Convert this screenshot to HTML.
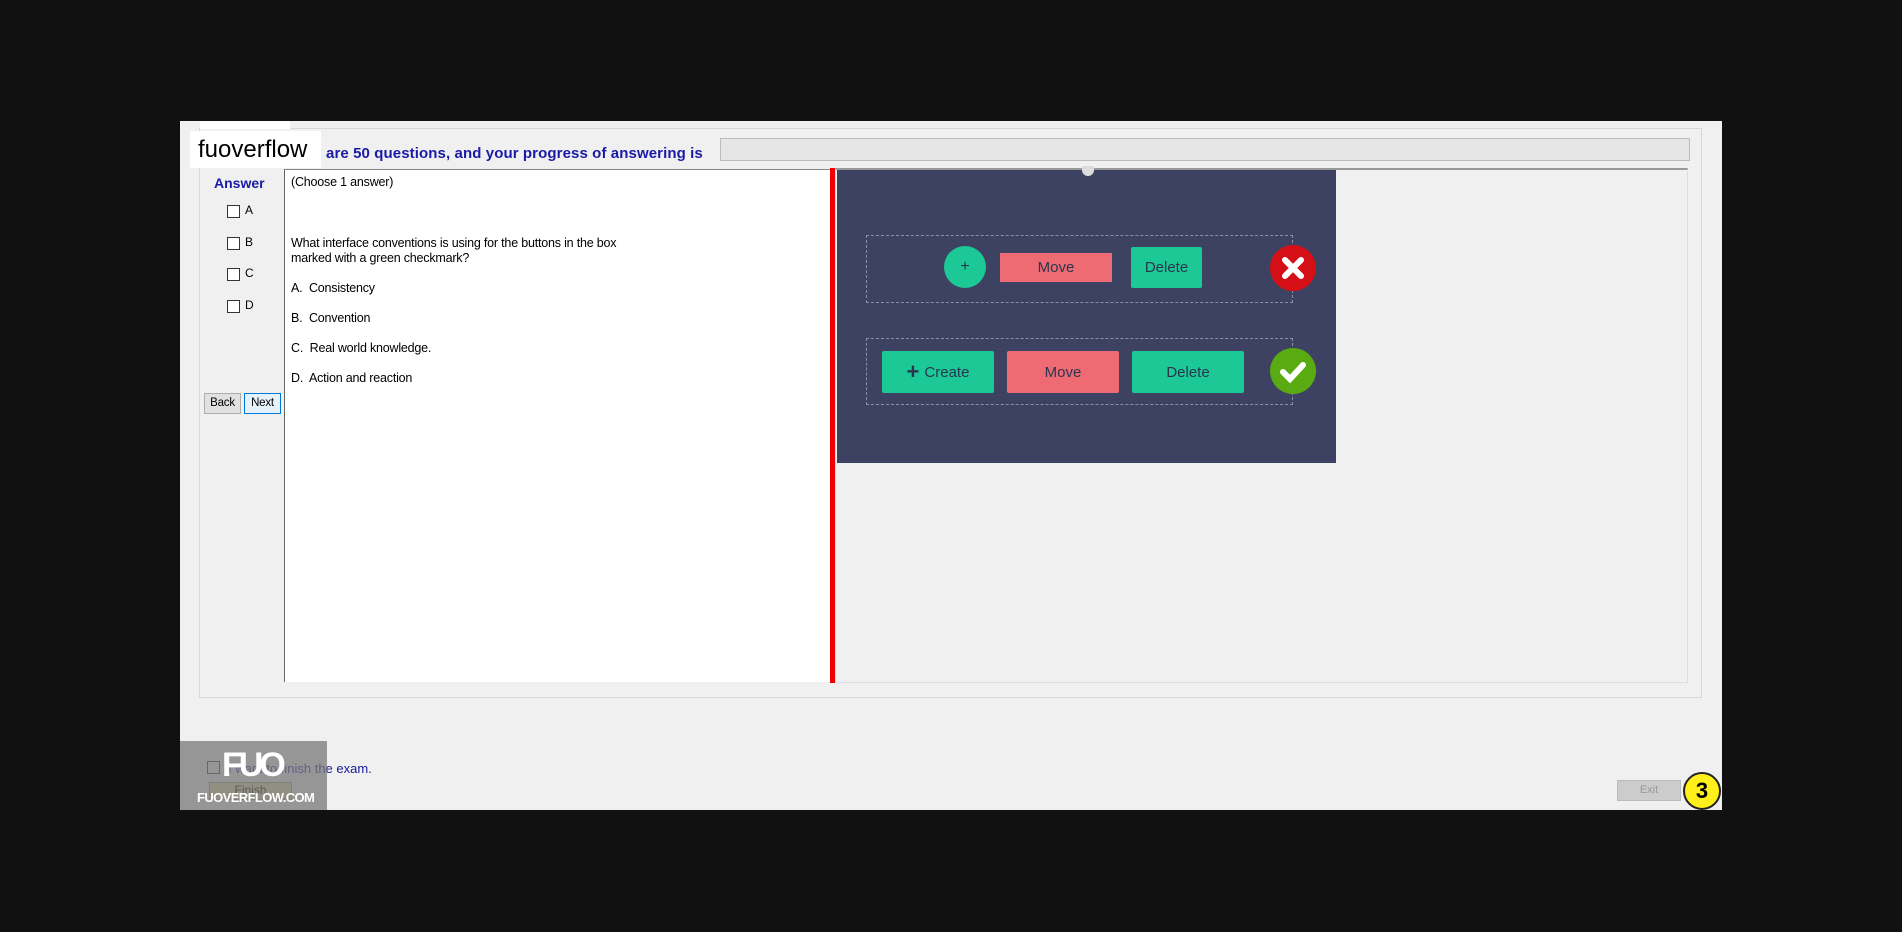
<!DOCTYPE html>
<html><head><meta charset="utf-8"><style>
*{margin:0;padding:0;box-sizing:border-box}
body{width:1902px;height:932px;background:#111;position:relative;overflow:hidden;font-family:"Liberation Sans",sans-serif}
.a{position:absolute}
.t{font-size:12.5px;color:#000;white-space:nowrap;letter-spacing:-.2px}
.cb{width:13px;height:13px;border:1px solid #333;background:#fff}
.btn{font-size:15px;color:#2b3550;display:flex;align-items:center;justify-content:center;border-radius:2px}
</style></head><body>
<div class="a" style="left:180px;top:121px;width:1542px;height:689px;background:#f0f0f0"></div>
<div class="a" style="left:199px;top:128px;width:1503px;height:570px;border:1px solid #d8d8d8"></div>
<div class="a" style="left:200px;top:121px;width:90px;height:8px;background:#fff"></div>
<div class="a" style="left:190px;top:131px;width:131px;height:37px;background:#fff;font-size:24px;line-height:37px;padding-left:8px;color:#000">fuoverflow</div>
<div class="a" style="left:326px;top:145px;font-size:15px;font-weight:bold;color:#1a1aa6;white-space:nowrap;letter-spacing:.1px">are 50 questions, and your progress of answering is</div>
<div class="a" style="left:720px;top:138px;width:970px;height:23px;background:#e6e6e6;border:1px solid #bcbcbc"></div>
<div class="a" style="left:835px;top:168px;width:853px;height:515px;border:1px solid #ddd;border-top:2px solid #999"></div>
<div class="a" style="left:284px;top:169px;width:547px;height:513px;background:#fff;border-left:1px solid #666;border-top:1px solid #888"></div>
<div class="a" style="left:830px;top:168px;width:5px;height:515px;background:#e00"></div>
<div class="a" style="left:214px;top:175px;font-size:14px;font-weight:bold;color:#1a1aa6">Answer</div>
<div class="a cb" style="left:227px;top:205px"></div><div class="a t" style="left:245px;top:203px;font-size:12px">A</div>
<div class="a cb" style="left:227px;top:237px"></div><div class="a t" style="left:245px;top:235px;font-size:12px">B</div>
<div class="a cb" style="left:227px;top:268px"></div><div class="a t" style="left:245px;top:266px;font-size:12px">C</div>
<div class="a cb" style="left:227px;top:300px"></div><div class="a t" style="left:245px;top:298px;font-size:12px">D</div>
<div class="a t" style="left:204px;top:393px;width:37px;height:21px;background:#e1e1e1;border:1px solid #adadad;font-size:11.5px;line-height:19px;text-align:center">Back</div>
<div class="a t" style="left:244px;top:393px;width:37px;height:21px;background:#e5f1fb;border:1px solid #0078d7;font-size:11.5px;line-height:19px;text-align:center">Next</div>
<div class="a t" style="left:291px;top:175px">(Choose 1 answer)</div>
<div class="a t" style="left:291px;top:236px;line-height:15px">What interface conventions is using for the buttons in the box<br>marked with a green checkmark?</div>
<div class="a t" style="left:291px;top:281px">A.&nbsp; Consistency</div>
<div class="a t" style="left:291px;top:311px">B.&nbsp; Convention</div>
<div class="a t" style="left:291px;top:341px">C.&nbsp; Real world knowledge.</div>
<div class="a t" style="left:291px;top:371px">D.&nbsp; Action and reaction</div>
<!-- image -->
<div class="a" style="left:837px;top:170px;width:499px;height:293px;background:#3e4262"></div>
<div class="a" style="left:1082px;top:166px;width:12px;height:10px;border-radius:0 0 6px 6px;background:#ddd"></div>
<div class="a" style="left:866px;top:235px;width:427px;height:68px;border:1px dashed #8a8ea8"></div>
<div class="a" style="left:866px;top:338px;width:427px;height:67px;border:1px dashed #8a8ea8"></div>
<div class="a btn" style="left:944px;top:246px;width:42px;height:42px;border-radius:50%;background:#1cc996;font-size:16px">+</div>
<div class="a btn" style="left:1000px;top:253px;width:112px;height:29px;background:#ef6b73;border-radius:0">Move</div>
<div class="a btn" style="left:1131px;top:247px;width:71px;height:41px;background:#1cc996">Delete</div>
<div class="a btn" style="left:882px;top:351px;width:112px;height:42px;background:#1cc996"><b style="font-size:22px;margin-right:5px;font-weight:bold">+</b>Create</div>
<div class="a btn" style="left:1007px;top:351px;width:112px;height:42px;background:#ef6b73">Move</div>
<div class="a btn" style="left:1132px;top:351px;width:112px;height:42px;background:#1cc996">Delete</div>
<svg class="a" style="left:1269px;top:244px" width="48" height="48"><circle cx="24" cy="24" r="23" fill="#d40f16"/><path d="M16 16L32 32M32 16L16 32" stroke="#fff" stroke-width="6" stroke-linecap="round"/></svg>
<svg class="a" style="left:1269px;top:347px" width="48" height="48"><circle cx="24" cy="24" r="23" fill="#5aab12"/><path d="M14 25L21 32L34 18" stroke="#fff" stroke-width="6" fill="none" stroke-linecap="round"/></svg>
<!-- bottom -->
<div class="a" style="left:209px;top:782px;width:83px;height:18px;background:#d8d49a;border:1px solid #999;font-size:12px;text-align:center">Finish</div>
<div class="a cb" style="left:207px;top:761px;background:transparent"></div>
<div class="a" style="left:228px;top:761px;font-size:13px;color:#1a1a9a">I want to finish the exam.</div>
<div class="a" style="left:180px;top:741px;width:147px;height:69px;background:rgba(120,120,120,.75)"></div>
<div class="a" style="left:222px;top:746px;font-size:34px;font-weight:bold;color:#fff;letter-spacing:-4px">FUO</div>
<div class="a" style="left:197px;top:790px;font-size:13px;font-weight:bold;color:#fff;letter-spacing:-.6px">FUOVERFLOW.COM</div>
<div class="a" style="left:1617px;top:780px;width:64px;height:21px;background:#ccc;border:1px solid #bbb;font-size:11px;color:#999;text-align:center;line-height:19px">Exit</div>
<div class="a" style="left:1683px;top:772px;width:38px;height:38px;border-radius:50%;background:#ffef1a;border:2px solid #222;font-size:22px;font-weight:bold;text-align:center;line-height:34px">3</div>
</body></html>
